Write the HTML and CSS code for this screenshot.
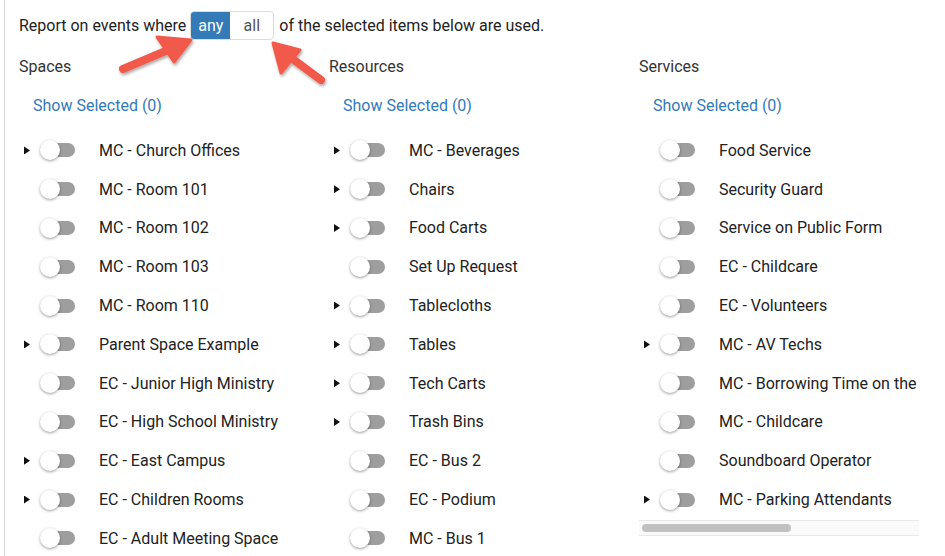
FILE: index.html
```html
<!DOCTYPE html>
<html lang="en">
    <head>
        <meta charset="UTF-8" />
        <title>Report Items</title>
        <link rel="stylesheet" href="styles.css">
    </head>
    <body>
        <div class="panel">
            <div class="match-line">
                <span>Report on events where</span>
                <div class="seg">
                    <span class="seg-btn active">any</span>
                    <span class="seg-btn">all</span>
                </div>
                <span>of the selected items below are used.</span>
            </div>

            <div class="columns">
                <div class="col">
                    <div class="col-title">Spaces</div>
                    <a class="show-sel">Show Selected (0)</a>
                    <div class="list">
                        <div class="row"><span class="caret on"></span><span class="toggle"></span><span class="label">MC - Church Offices</span></div>
                        <div class="row"><span class="caret"></span><span class="toggle"></span><span class="label">MC - Room 101</span></div>
                        <div class="row"><span class="caret"></span><span class="toggle"></span><span class="label">MC - Room 102</span></div>
                        <div class="row"><span class="caret"></span><span class="toggle"></span><span class="label">MC - Room 103</span></div>
                        <div class="row"><span class="caret"></span><span class="toggle"></span><span class="label">MC - Room 110</span></div>
                        <div class="row"><span class="caret on"></span><span class="toggle"></span><span class="label">Parent Space Example</span></div>
                        <div class="row"><span class="caret"></span><span class="toggle"></span><span class="label">EC - Junior High Ministry</span></div>
                        <div class="row"><span class="caret"></span><span class="toggle"></span><span class="label">EC - High School Ministry</span></div>
                        <div class="row"><span class="caret on"></span><span class="toggle"></span><span class="label">EC - East Campus</span></div>
                        <div class="row"><span class="caret on"></span><span class="toggle"></span><span class="label">EC - Children Rooms</span></div>
                        <div class="row"><span class="caret"></span><span class="toggle"></span><span class="label">EC - Adult Meeting Space</span></div>
                    </div>
                </div>

                <div class="col">
                    <div class="col-title">Resources</div>
                    <a class="show-sel">Show Selected (0)</a>
                    <div class="list">
                        <div class="row"><span class="caret on"></span><span class="toggle"></span><span class="label">MC - Beverages</span></div>
                        <div class="row"><span class="caret on"></span><span class="toggle"></span><span class="label">Chairs</span></div>
                        <div class="row"><span class="caret on"></span><span class="toggle"></span><span class="label">Food Carts</span></div>
                        <div class="row"><span class="caret"></span><span class="toggle"></span><span class="label">Set Up Request</span></div>
                        <div class="row"><span class="caret on"></span><span class="toggle"></span><span class="label">Tablecloths</span></div>
                        <div class="row"><span class="caret on"></span><span class="toggle"></span><span class="label">Tables</span></div>
                        <div class="row"><span class="caret on"></span><span class="toggle"></span><span class="label">Tech Carts</span></div>
                        <div class="row"><span class="caret on"></span><span class="toggle"></span><span class="label">Trash Bins</span></div>
                        <div class="row"><span class="caret"></span><span class="toggle"></span><span class="label">EC - Bus 2</span></div>
                        <div class="row"><span class="caret"></span><span class="toggle"></span><span class="label">EC - Podium</span></div>
                        <div class="row"><span class="caret"></span><span class="toggle"></span><span class="label">MC - Bus 1</span></div>
                    </div>
                </div>

                <div class="col">
                    <div class="col-title">Services</div>
                    <a class="show-sel">Show Selected (0)</a>
                    <div class="list scroller">
                        <div class="scroll-view">
                            <div class="row"><span class="caret"></span><span class="toggle"></span><span class="label">Food Service</span></div>
                            <div class="row"><span class="caret"></span><span class="toggle"></span><span class="label">Security Guard</span></div>
                            <div class="row"><span class="caret"></span><span class="toggle"></span><span class="label">Service on Public Form</span></div>
                            <div class="row"><span class="caret"></span><span class="toggle"></span><span class="label">EC - Childcare</span></div>
                            <div class="row"><span class="caret"></span><span class="toggle"></span><span class="label">EC - Volunteers</span></div>
                            <div class="row"><span class="caret on"></span><span class="toggle"></span><span class="label">MC - AV Techs</span></div>
                            <div class="row"><span class="caret"></span><span class="toggle"></span><span class="label">MC - Borrowing Time on the</span></div>
                            <div class="row"><span class="caret"></span><span class="toggle"></span><span class="label">MC - Childcare</span></div>
                            <div class="row"><span class="caret"></span><span class="toggle"></span><span class="label">Soundboard Operator</span></div>
                            <div class="row"><span class="caret on"></span><span class="toggle"></span><span class="label">MC - Parking Attendants</span></div>
                        </div>
                        <div class="hscroll"><div class="hscroll-thumb"></div></div>
                    </div>
                </div>
            </div>

            <!-- annotation arrows -->
            <svg class="arrows" width="945" height="120" viewBox="0 0 945 120">
                <defs>
                    <filter id="sh" x="-20%" y="-20%" width="140%" height="140%">
                        <feDropShadow dx="1" dy="2" stdDeviation="1.5" flood-color="#000" flood-opacity="0.35"/>
                    </filter>
                </defs>
                <g filter="url(#sh)" fill="#f15a4b" stroke="#f15a4b" stroke-linecap="round" stroke-linejoin="round">
                    <line x1="123" y1="69" x2="168" y2="50" stroke-width="8"/>
                    <polygon points="191,40 157,37 174,62" stroke-width="3"/>
                    <line x1="321" y1="80" x2="290" y2="57" stroke-width="8"/>
                    <polygon points="273,43 281,73 300,50" stroke-width="3"/>
                </g>
            </svg>
        </div>
    </body>
</html>
```

FILE: styles.css
```css
body {
  margin: 0;
  overflow: hidden;
  background: #fff;
  font-family: Roboto, "Liberation Sans", sans-serif;
  font-size: 16px;
  color: #333;
}

.panel {
  position: relative;
  margin-left: 4px;
  height: 556px;
  border-left: 1px solid #d4d4d4;
  padding-left: 14px;
  box-sizing: border-box;
}

.match-line {
  display: flex;
  align-items: center;
  height: 29px;
  padding-top: 11px;
  color: #222;
}

.seg {
  display: flex;
  height: 29px;
  margin: 0 5px 0 4px;
  border: 1px solid #ddd;
  border-radius: 4px;
  box-sizing: border-box;
  overflow: hidden;
}

.seg-btn {
  display: flex;
  align-items: center;
  justify-content: center;
  width: 43px;
  color: #555;
}

.seg-btn.active {
  width: 39px;
  background: #337ab7;
  color: #fff;
}

.columns {
  display: grid;
  grid-template-columns: 310px 310px 280px;
}

.col-title {
  height: 20px;
  line-height: 20px;
  margin-top: 17px;
  color: #333;
}

.show-sel {
  display: block;
  margin: 19px 0 0 14px;
  height: 20px;
  line-height: 20px;
  color: #337ab7;
}

.list {
  margin-top: 15px;
}

.row {
  display: flex;
  align-items: center;
  height: 38.8px;
  padding-left: 5px;
  white-space: nowrap;
}

.caret {
  width: 16px;
  height: 8px;
  flex: none;
}

.caret.on::before {
  content: "";
  display: block;
  width: 6px;
  height: 8px;
  background: #111;
  clip-path: polygon(0 0, 100% 50%, 0 100%);
}

.toggle {
  position: relative;
  flex: none;
  width: 37px;
  height: 20px;
  margin-right: 22px;
}

.toggle::before {
  content: "";
  position: absolute;
  left: 5px;
  right: 2px;
  top: 3px;
  height: 14px;
  border-radius: 7px;
  background: #9e9e9e;
}

.toggle::after {
  content: "";
  position: absolute;
  left: 0;
  top: 0;
  width: 20px;
  height: 20px;
  border-radius: 50%;
  background: #fff;
  box-shadow: 0 1px 3px rgba(0, 0, 0, 0.4);
}

.label {
  color: #222;
}

.scroller {
  width: 280px;
}

.scroll-view {
  overflow: hidden;
}

.hscroll {
  height: 14px;
  margin-top: 1px;
  background: #fafafa;
  border-top: 1px solid #e8e8e8;
  border-bottom: 1px solid #e8e8e8;
  display: flex;
  align-items: center;
  padding-left: 3px;
}

.hscroll-thumb {
  width: 149px;
  height: 8px;
  border-radius: 4px;
  background: #c1c1c1;
}

.arrows {
  position: absolute;
  left: -5px;
  top: 0;
  pointer-events: none;
}
```
